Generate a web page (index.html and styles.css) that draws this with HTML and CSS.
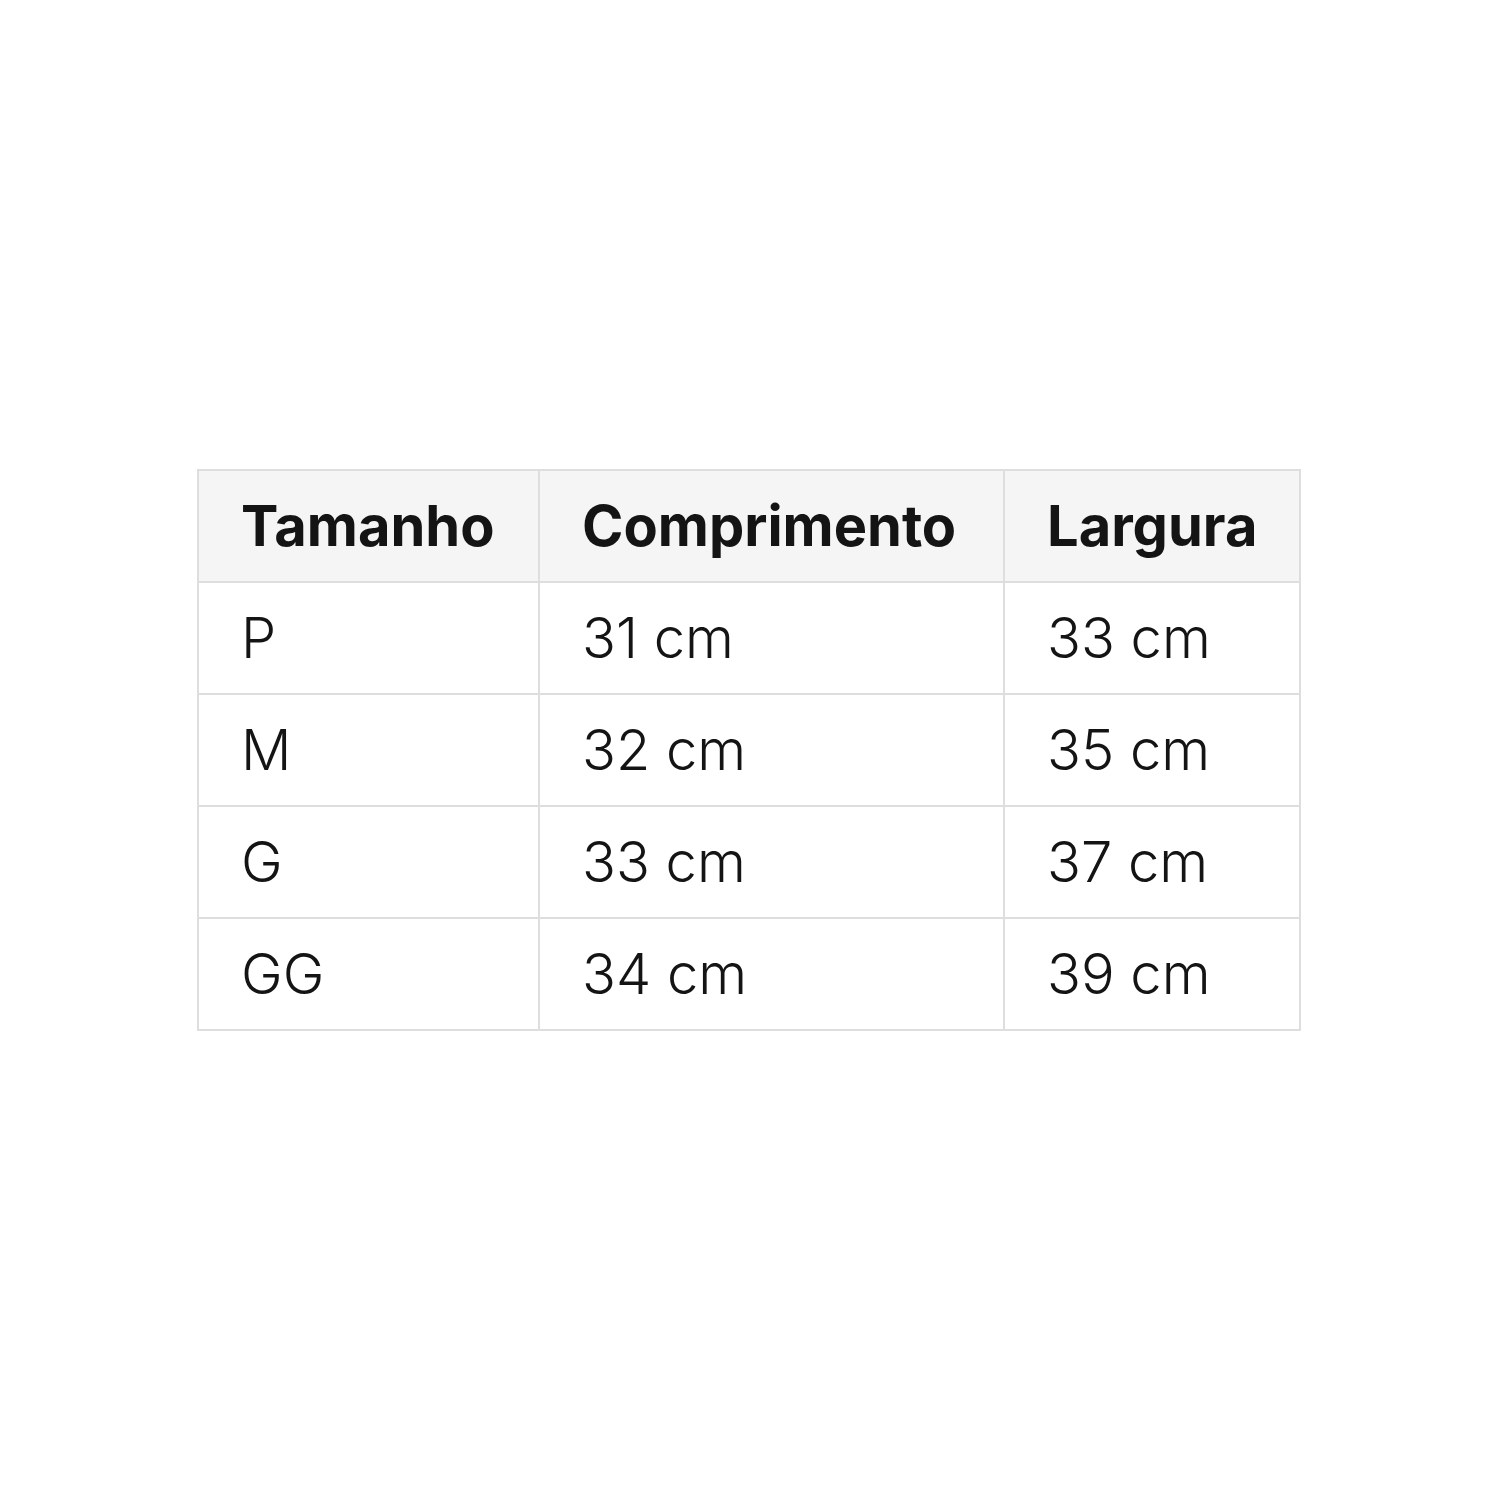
FILE: index.html
```html
<!DOCTYPE html>
<html lang="pt">
<head>
<meta charset="utf-8">
<link rel="stylesheet" href="styles.css">
</head>
<body>
<main class="page">
  <table class="sizes">
    <colgroup>
      <col class="c1"><col class="c2"><col class="c3">
    </colgroup>
    <thead>
      <tr><th>Tamanho</th><th>Comprimento</th><th>Largura</th></tr>
    </thead>
    <tbody>
      <tr><td>P</td><td>31 cm</td><td>33 cm</td></tr>
      <tr><td>M</td><td>32 cm</td><td>35 cm</td></tr>
      <tr><td>G</td><td>33 cm</td><td>37 cm</td></tr>
      <tr><td>GG</td><td>34 cm</td><td>39 cm</td></tr>
    </tbody>
  </table>
</main>
</body>
</html>
```
FILE: styles.css
```css
html, body {
  margin: 0;
  padding: 0;
  background: #ffffff;
}
.page {
  width: 1500px;
  height: 1500px;
  display: flex;
  align-items: center;
  justify-content: center;
  font-family: Inter, "Noto Sans", sans-serif;
  color: #141414;
}
.sizes {
  border-collapse: collapse;
  table-layout: fixed;
  width: 1104px;
  margin-left: -2px;
}
.c1 { width: 341px; }
.c2 { width: 465px; }
.c3 { width: 296px; }
.sizes th,
.sizes td {
  border: 2px solid #dedede;
  height: 112px;
  padding: 0 0 0 42px;
  text-align: left;
  vertical-align: middle;
  font-size: 56px;
  line-height: 66px;
  box-sizing: border-box;
  white-space: nowrap;
}
.sizes th {
  background: #f5f5f5;
  font-weight: 700;
}
.sizes td {
  font-weight: 300;
}
```
